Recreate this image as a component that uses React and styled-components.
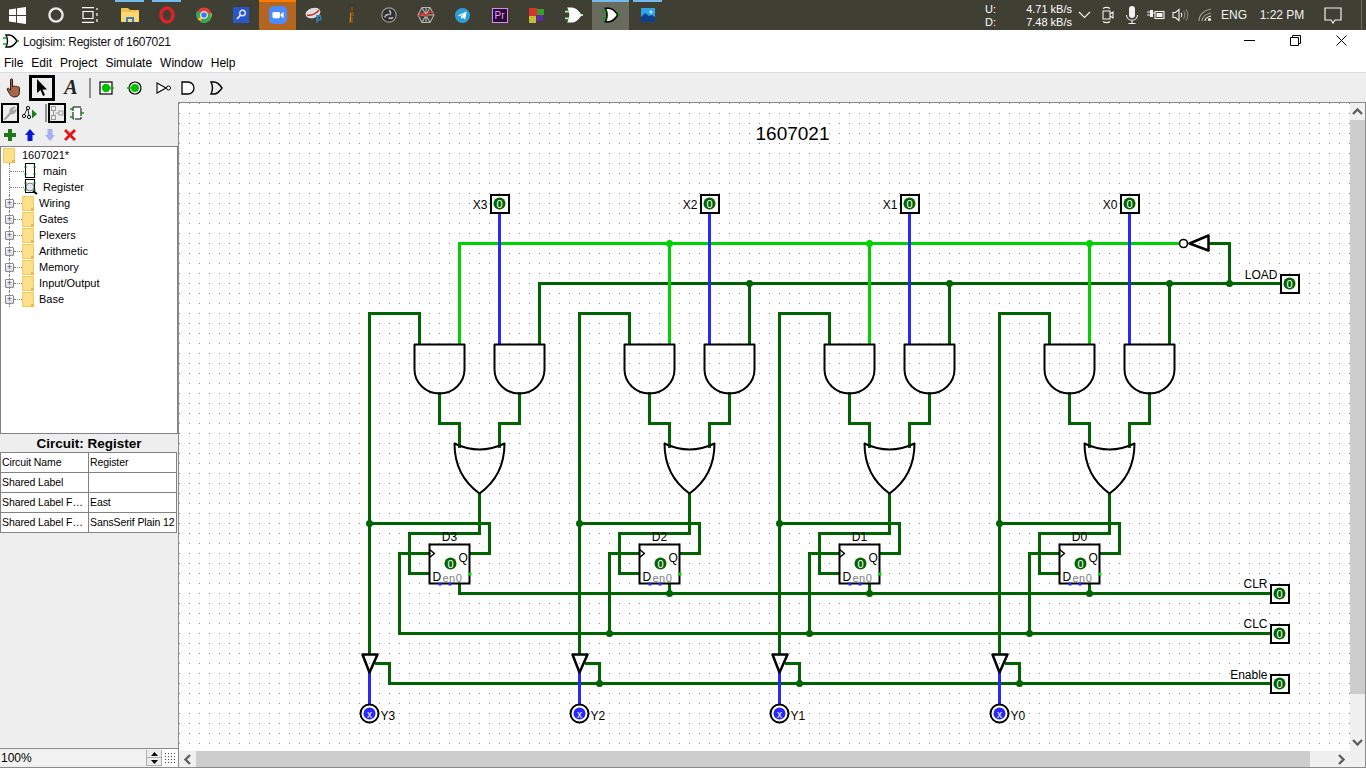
import React from "react";
import styled, { createGlobalStyle } from "styled-components";

const DARK = "#006400";
const LIME = "#00d200";
const BLUE = "#2828ff";

const Global = createGlobalStyle`
  html, body { margin: 0; padding: 0; overflow: hidden; background: #fff; }
  * { box-sizing: border-box; }
  body { font-family: "Liberation Sans", Arial, sans-serif; font-size: 12px; color: #000; }
`;

const Screen = styled.div`
  width: 1366px;
  height: 768px;
  display: flex;
  flex-direction: column;
  overflow: hidden;
`;

/* windows taskbar */
const Taskbar = styled.div`
  height: 30px;
  flex: none;
  display: flex;
  background: #3f4033;
  color: #fff;
`;

const TaskSlot = styled.div`
  width: 37px;
  height: 30px;
  display: flex;
  align-items: center;
  justify-content: center;
  position: relative;
  background: ${(p) => (p.$tone === "zoom" ? "#b4651f" : p.$tone === "active" ? "#6a6b5f" : "transparent")};
  &::before {
    content: "";
    position: absolute;
    top: 0;
    height: 2px;
    left: ${(p) => (p.$tone ? "0" : "4px")};
    right: ${(p) => (p.$tone ? "0" : "4px")};
    background: ${(p) => (p.$tone === "zoom" ? "#ff7a00" : p.$open || p.$tone === "active" ? "#76b9ed" : "transparent")};
  }
`;

const Tray = styled.div`
  margin-left: auto;
  display: flex;
  align-items: center;
  height: 30px;
  font-size: 12px;
`;

const NetSpeed = styled.div`
  width: 87px;
  display: grid;
  grid-template-columns: 1fr auto;
  font-size: 11px;
  line-height: 13px;
  padding-top: 2px;
  span:nth-child(even) { text-align: right; }
`;

const TraySlot = styled.div`
  width: ${(p) => p.$w}px;
  height: 30px;
  display: flex;
  align-items: center;
  justify-content: center;
  white-space: nowrap;
  color: #f2f2f2;
`;

const TrayEnd = styled.div`
  width: 15px;
  height: 30px;
  background: linear-gradient(90deg, transparent 10px, #6a6b5f 10px, #6a6b5f 11px, transparent 11px);
`;

/* logisim window */
const TitleBar = styled.div`
  height: 22px;
  flex: none;
  display: flex;
  align-items: center;
  padding-left: 3px;
  padding-right: 2px;
  background: #fff;
`;

const TitleText = styled.span`
  margin-left: 4px;
  padding-top: 2px;
  font-size: 12px;
  letter-spacing: -0.3px;
  color: #111;
`;

const WindowControls = styled.div`
  margin-left: auto;
  display: flex;
  align-self: flex-start;
`;

const WindowButton = styled.div`
  width: 46px;
  height: 20px;
  display: flex;
  align-items: center;
  justify-content: center;
`;

const MenuBar = styled.div`
  height: 20px;
  flex: none;
  display: flex;
  align-items: center;
  background: #fff;
  padding: 2px 0 0 4px;
`;

const MenuItem = styled.span`
  margin-right: 8px;
  font-size: 12px;
`;

const ToolBar = styled.div`
  height: 30px;
  flex: none;
  display: flex;
  align-items: center;
  background: #eeeeee;
  border-top: 1px solid #dcdcdc;
  padding-left: 2px;
`;

const Tool = styled.div`
  width: 26px;
  height: 26px;
  flex: none;
  margin-left: ${(p) => p.$ml || 0}px;
  display: flex;
  align-items: center;
  justify-content: center;
  border: ${(p) => (p.$selected ? "3px solid #000" : "none")};
  font-family: "Liberation Serif", serif;
  font-weight: bold;
  font-style: italic;
  font-size: 20px;
  color: #222;
`;

const ToolSeparator = styled.div`
  width: 2px;
  height: ${(p) => p.$h}px;
  flex: none;
  margin-left: ${(p) => p.$ml}px;
  background: #8f8f8f;
`;

const Workspace = styled.div`
  flex: 1;
  min-height: 0;
  display: flex;
`;

const LeftColumn = styled.div`
  width: 178px;
  flex: none;
  display: flex;
  flex-direction: column;
  background: #eeeeee;
`;

const ExplorerBar = styled.div`
  height: 22px;
  flex: none;
  display: flex;
  align-items: center;
  padding-left: 1px;
`;

const ExplorerTool = styled.div`
  width: ${(p) => p.$w || 18}px;
  height: 20px;
  flex: none;
  margin-left: ${(p) => p.$ml || 0}px;
  display: flex;
  align-items: center;
  justify-content: center;
  border: ${(p) => (p.$selected ? "2px solid #000" : "none")};
`;

const ActionBar = styled.div`
  height: 22px;
  flex: none;
  display: flex;
  align-items: center;
  gap: 8px;
  padding-left: 4px;
`;

const TreeBox = styled.div`
  height: 288px;
  flex: none;
  background: #fff;
  border: 1px solid #828282;
  font-size: 11px;
`;

const TreeRow = styled.div`
  height: 16px;
  display: flex;
  align-items: center;
  white-space: nowrap;
`;

const RootSpacer = styled.div`
  width: 2px;
  flex: none;
`;

const Guide = styled.div`
  width: ${(p) => p.$w}px;
  height: 16px;
  flex: none;
  margin-left: 8px;
  border-left: 1px dotted #808080;
  display: flex;
  align-items: center;
`;

const GuideStub = styled.div`
  flex: 1;
  border-top: 1px dotted #808080;
`;

const Expander = styled.div`
  width: 9px;
  height: 9px;
  flex: none;
  margin-left: -5px;
  border: 1px solid #8a8a8a;
  border-radius: 1px;
  background: linear-gradient(#fff, #dcdcdc);
  color: #1f3f8f;
  font-size: 9px;
  line-height: 7px;
  text-align: center;
`;

const TreeLabel = styled.span`
  margin-left: ${(p) => p.$ml || 0}px;
  font-size: 11px;
`;

const AttrTitle = styled.div`
  height: 18px;
  flex: none;
  display: flex;
  align-items: center;
  justify-content: center;
  font-weight: bold;
  font-size: 13.5px;
`;

const AttrTable = styled.div`
  display: grid;
  grid-template-columns: 88px 88px;
  grid-auto-rows: 20px;
  flex: none;
  border-top: 1px solid #828282;
  border-left: 1px solid #828282;
  margin-right: 1px;
`;

const AttrCell = styled.div`
  border-right: 1px solid #828282;
  border-bottom: 1px solid #828282;
  background: #fff;
  padding-left: 1px;
  font-size: 10.5px;
  letter-spacing: -0.1px;
  line-height: 18px;
  white-space: nowrap;
`;

const Filler = styled.div`
  flex: 1;
`;

const ZoomRow = styled.div`
  height: 20px;
  flex: none;
  display: flex;
  align-items: stretch;
  border-top: 1px solid #8a8a8a;
  border-bottom: 1px solid #8a8a8a;
`;

const ZoomInput = styled.div`
  width: 146px;
  padding-left: 1px;
  margin: 2px 0;
  font-size: 12px;
  line-height: 14px;
  background: #f2f2f2;
`;

const Spinner = styled.div`
  width: 16px;
  display: flex;
  flex-direction: column;
  border-left: 1px solid #b0b0b0;
  border-right: 1px solid #b0b0b0;
  margin: 1px 0;
`;

const SpinButton = styled.div`
  flex: 1;
  display: flex;
  align-items: center;
  justify-content: center;
  background: #ececec;
  border-bottom: 1px solid #b0b0b0;
`;

const GripBox = styled.div`
  flex: 1;
  display: flex;
  align-items: center;
  justify-content: center;
  background: #fff;
`;

const RightColumn = styled.div`
  flex: 1;
  min-width: 0;
  display: flex;
  flex-direction: column;
  border: 1px solid #8a8a8a;
`;

const CanvasRow = styled.div`
  height: 648px;
  flex: none;
  display: flex;
`;

const CanvasSvg = styled.svg`
  width: 1171px;
  height: 648px;
  flex: none;
  display: block;
  background: #fff;
`;

const VerticalBar = styled.div`
  width: 15px;
  flex: none;
  display: flex;
  flex-direction: column;
  background: #f0f0f0;
`;

const HorizontalBar = styled.div`
  height: 16px;
  flex: none;
  display: flex;
  background: #f0f0f0;
`;

const ScrollArrow = styled.div`
  flex: none;
  width: ${(p) => p.$w}px;
  height: ${(p) => p.$h}px;
  display: flex;
  align-items: center;
  justify-content: center;
`;

const ScrollThumb = styled.div`
  flex: none;
  width: ${(p) => p.$w || "auto"};
  height: ${(p) => p.$h || "auto"};
  background: #cdcdcd;
`;

const Track = styled.div`
  flex: 1;
`;

/* circuit parts */
const WirePath = styled.path`
  fill: none;
  stroke: ${(p) => p.$c || DARK};
  stroke-width: 3;
  stroke-linecap: square;
  stroke-linejoin: miter;
`;

const GatePath = styled.path`
  fill: none;
  stroke: #000;
  stroke-width: ${(p) => p.$w || 2};
  stroke-linejoin: round;
`;

const Joint = styled.circle`
  fill: ${(p) => p.$c || DARK};
`;

const PinBox = styled.rect`
  fill: #fff;
  stroke: #000;
  stroke-width: 2;
`;

const CanvasText = styled.text`
  font-family: "Liberation Sans", Arial, sans-serif;
  font-size: ${(p) => p.$size || 12}px;
  fill: ${(p) => p.$fill || "#000"};
  text-anchor: ${(p) => p.$anchor || "start"};
  letter-spacing: ${(p) => p.$track || 0}px;
`;

const Chev = ({ d }) => (
  <svg width="11" height="11" viewBox="0 0 11 11">
    <path d={d} fill="none" stroke="#606060" strokeWidth="2.4" />
  </svg>
);

const OrIcon = ({ fill = "none", stroke = "#000", size = 16, stub }) => (
  <svg width={size} height={size} viewBox="0 0 16 16">
    <path d="M3 2h3c3 0 6 3 8 6-2 3-5 6-8 6H3c2-4 2-8 0-12z" fill={fill} stroke={stroke} strokeWidth="1.4" />
    {stub && <path d="M0 5h4M0 11h4M14 8h2" stroke={stub} strokeWidth="1.6" />}
  </svg>
);

const Windows = () => (
  <svg width="17" height="17" viewBox="0 0 17 17" style={{ marginLeft: -2 }}>
    <path d="M0 2.4 7 1.4V8H0zM8 1.3 17 0V8H8zM0 9h7v6.6l-7-1zM8 9h9v8l-9-1.3z" fill="#fff" />
  </svg>
);

const Cortana = () => (
  <svg width="18" height="18" viewBox="0 0 18 18">
    <circle cx="9" cy="9" r="6.6" fill="none" stroke="#e8e8e8" strokeWidth="2.4" />
  </svg>
);

const TaskView = () => (
  <svg width="18" height="16" viewBox="0 0 18 16" style={{ marginLeft: -4 }}>
    <path d="M0 .7h12M0 15.3h12M1 4.5h10v7H1zM15 1v2M15 6v3M15 12v3" fill="none" stroke="#fff" strokeWidth="1.2" />
  </svg>
);

const Explorer = () => (
  <svg width="18" height="16" viewBox="0 0 18 16">
    <path d="M0 1h7l2 2h9v12H0z" fill="#f4c14d" />
    <path d="M0 5h18v10H0z" fill="#fbd872" />
    <path d="M5 10h8v5h-2v-3H7v3H5z" fill="#2f7fc9" />
  </svg>
);

const Opera = () => (
  <svg width="16" height="18" viewBox="0 0 16 18">
    <ellipse cx="8" cy="9" rx="6" ry="7" fill="none" stroke="#d9222a" strokeWidth="3.6" />
  </svg>
);

const Chrome = () => (
  <svg width="16" height="16" viewBox="0 0 16 16">
    <circle cx="8" cy="8" r="7.6" fill="#e0403a" />
    <path d="M8 8 1.4 12A7.6 7.6 0 0 1 1 4z" fill="#34a853" />
    <path d="M8 8 15.4 6A7.6 7.6 0 0 1 7 15.5L1.4 12z" fill="#fbc02d" />
    <path d="M4 15 8 8l7.4-2A7.6 7.6 0 0 0 15 11.5a7.6 7.6 0 0 1-11 3.5z" fill="#34a853" />
    <circle cx="8" cy="8" r="3.8" fill="#fff" />
    <circle cx="8" cy="8" r="2.8" fill="#3b78e7" />
  </svg>
);

const Finder = () => (
  <svg width="16" height="16" viewBox="0 0 16 16">
    <rect width="16" height="16" fill="#2a56c6" />
    <circle cx="9.5" cy="6" r="2.8" fill="none" stroke="#dce6ff" strokeWidth="1.4" />
    <path d="M7.5 8.2 4 12" stroke="#dce6ff" strokeWidth="1.8" />
  </svg>
);

const ZoomApp = () => (
  <svg width="18" height="18" viewBox="0 0 18 18">
    <rect width="18" height="18" rx="5" fill="#4a8cff" />
    <rect x="3.5" y="6" width="7.5" height="6.2" rx="1.4" fill="#fff" />
    <path d="M11.6 8.3 14.6 6v6.2l-3-2.2z" fill="#fff" />
  </svg>
);

const Dish = () => (
  <svg width="20" height="18" viewBox="0 0 20 18">
    <ellipse cx="8" cy="7" rx="7.6" ry="5" fill="#dedede" transform="rotate(-18 8 7)" />
    <path d="M2 9c4 1 9-1 12-5" fill="none" stroke="#c9302c" strokeWidth="1.6" />
    <path d="M11 10c3-1 5 0 5 2s-2 3-3 1 1-4 3-3M12 12v5" fill="none" stroke="#2e86c1" strokeWidth="1.4" />
  </svg>
);

const Torch = () => (
  <svg width="8" height="18" viewBox="0 0 8 18">
    <path d="M3 1h2v4H3zM2 6h4v4H2zM1 11h4v6H1z" fill="#7a4d12" />
    <path d="M2 7h1v9H2z" fill="#c58a2b" />
  </svg>
);

const Obs = () => (
  <svg width="16" height="16" viewBox="0 0 16 16">
    <circle cx="8" cy="8" r="7.2" fill="#2f2f30" stroke="#9a9a9a" strokeWidth="1.2" />
    <path d="M8 3.5a2.6 2.6 0 0 1 .6 4.4M4 10.5a2.6 2.6 0 0 1 3.8-2.6M12 10.2a2.6 2.6 0 0 1-4.2.2" fill="none" stroke="#bdbdbd" strokeWidth="1.6" />
  </svg>
);

const Web = () => (
  <svg width="18" height="18" viewBox="0 0 18 18">
    <path d="M5 1.5h8L17 9l-4 7.5H5L1 9zM9 1v16M1 9h16M5 1.5l8 15M13 1.5l-8 15" fill="none" stroke="#b5b5b5" strokeWidth="1.1" />
    <path d="M1.5 10 6 7l3 3 3.5-4 4 1.5" fill="none" stroke="#d62d2d" strokeWidth="1.8" />
  </svg>
);

const Telegram = () => (
  <svg width="15" height="15" viewBox="0 0 15 15">
    <circle cx="7.5" cy="7.5" r="7.5" fill="#2a9fd8" />
    <path d="M2.8 7.4 11.6 3.6 10.2 11.6 7.6 9.6 6.3 10.9 6 8.6 10.2 5 4.9 8.2z" fill="#fff" />
  </svg>
);

const PrBadge = styled.div`
  width: 16px;
  height: 15px;
  border: 1px solid #d88ef0;
  background: #2a0a3a;
  color: #e7a6f7;
  font-size: 10px;
  line-height: 13px;
  text-align: center;
`;

const Blocks = () => (
  <svg width="15" height="15" viewBox="0 0 15 15">
    <path d="M0 0h8v8H0z" fill="#d8332a" />
    <path d="M8 1h7v6H8z" fill="#3aa02b" />
    <path d="M0 8h7v7H0z" fill="#c6bd36" />
    <path d="M7 7h7v6H7z" fill="#5a2ea6" />
  </svg>
);

const Photos = () => (
  <svg width="14" height="14" viewBox="0 0 14 14">
    <rect width="14" height="14" fill="#2ea5e6" />
    <path d="M0 14V9l4-4 4 3 3-1 3 2v5z" fill="#123f8a" />
    <path d="M10 2.5v3M8.5 4h3" stroke="#fff" strokeWidth="1" />
  </svg>
);

const taskIcons = [
  { icon: <Windows /> },
  { icon: <Cortana /> },
  { icon: <TaskView /> },
  { icon: <Explorer />, open: true },
  { icon: <Opera />, open: true },
  { icon: <Chrome /> },
  { icon: <Finder /> },
  { icon: <ZoomApp />, tone: "zoom" },
  { icon: <Dish /> },
  { icon: <Torch /> },
  { icon: <Obs /> },
  { icon: <Web /> },
  { icon: <Telegram /> },
  { icon: <PrBadge>Pr</PrBadge> },
  { icon: <Blocks /> },
  { icon: <OrIcon fill="#fff" stroke="#fff" size={18} stub="#a9f0a9" /> },
  { icon: <OrIcon fill="#fff" stroke="#000" size={18} stub="#00a000" />, tone: "active" },
  { icon: <Photos />, open: true },
];

const stroke = { fill: "none", stroke: "#f2f2f2", strokeWidth: 1.1 };

const TrayCamera = () => (
  <svg width="16" height="18" viewBox="0 0 16 18">
    <path d="M3 5h7v8H3zM10 8l3-2v6l-3-2z" {...stroke} />
    <path d="M3 2.5c2-1.3 5-1.3 7 0M3 15.5c2 1.3 5 1.3 7 0" {...stroke} />
  </svg>
);

const TrayMic = () => (
  <svg width="14" height="20" viewBox="0 0 14 20">
    <rect x="4" y="1" width="6" height="12" rx="3" fill="#f2f2f2" />
    <path d="M1.5 10c0 7 11 7 11 0M7 15.5V18M3.5 18.5h7" {...stroke} />
  </svg>
);

const TrayBattery = () => (
  <svg width="18" height="12" viewBox="0 0 18 12">
    <path d="M0 3h3M0 6h3" {...stroke} />
    <rect x="3" y="1" width="3" height="7" fill="#f2f2f2" />
    <path d="M6 4h2" {...stroke} />
    <rect x="8" y="2.5" width="9" height="7" {...stroke} />
    <rect x="9.5" y="4" width="6" height="4" fill="#f2f2f2" />
  </svg>
);

const TrayVolume = () => (
  <svg width="17" height="14" viewBox="0 0 17 14">
    <path d="M1 4.5h2.5L7 1.5v11l-3.5-3H1z" {...stroke} />
    <path d="M9 5c1 1 1 3 0 4" {...stroke} />
    <path d="M11.5 3c1.7 2 1.7 6 0 8M14 1.5c2.4 3 2.4 8 0 11" fill="none" stroke="#8b8b80" strokeWidth="1.1" />
  </svg>
);

const TrayWifi = () => (
  <svg width="16" height="14" viewBox="0 0 16 14">
    <path d="M1 13C1 7 6 2 13 1M4 13c0-4 4-7 9-8" fill="none" stroke="#a5a59b" strokeWidth="1.1" />
    <path d="M7 13c0-2 2-4 6-5" {...stroke} />
    <circle cx="11.5" cy="11.5" r="1.6" fill="#f2f2f2" />
  </svg>
);

const Note = () => (
  <svg width="18" height="17" viewBox="0 0 18 17">
    <path d="M1 1h16v12h-6l-2 3-2-3H1z" fill="none" stroke="#f2f2f2" strokeWidth="1.2" />
  </svg>
);

const AndTool = () => (
  <svg width="16" height="16" viewBox="0 0 16 16">
    <path d="M2 2h6a6 6 0 0 1 0 12H2z" fill="#fff" stroke="#000" strokeWidth="1.3" />
  </svg>
);

const NotTool = () => (
  <svg width="16" height="14" viewBox="0 0 16 14">
    <path d="M1 2l9 5-9 5z" fill="#fff" stroke="#000" strokeWidth="1.1" />
    <circle cx="12.5" cy="7" r="2" fill="#fff" stroke="#000" strokeWidth="1" />
  </svg>
);

const PinInTool = () => (
  <svg width="16" height="14" viewBox="0 0 16 14">
    <rect x="1" y="1" width="12" height="12" fill="#fff" stroke="#000" strokeWidth="1.2" />
    <circle cx="7" cy="7" r="4.2" fill="#00c000" />
    <path d="M11 7h4" stroke="#00c000" strokeWidth="1.6" />
  </svg>
);

const PinOutTool = () => (
  <svg width="16" height="14" viewBox="0 0 16 14">
    <circle cx="8" cy="7" r="6" fill="#fff" stroke="#000" strokeWidth="1.2" />
    <circle cx="8" cy="7" r="4" fill="#00c000" />
    <path d="M0 7h4" stroke="#00c000" strokeWidth="1.6" />
  </svg>
);

const HandTool = () => (
  <svg width="18" height="20" viewBox="0 0 16 18">
    <path d="M4 1.5c0-1 1.8-1 1.8 0V8l1-.6c.6-.4 1.4-.2 1.7.3.7-.5 1.5-.3 1.8.3.7-.4 1.6 0 1.7.7V13c0 2.5-1.6 4-4 4H7c-2 0-3-1.2-4-3L1 10.5c-.5-1 .8-1.8 1.6-1L4 11z" fill="#a8654a" stroke="#2c1a14" strokeWidth=".9" />
  </svg>
);

const ArrowTool = () => (
  <svg width="12" height="18" viewBox="0 0 12 18">
    <path d="M1 0v14l3.5-3 2.5 6 2-1-2.5-5.500H11z" fill="#000" />
  </svg>
);

const Wrench = () => (
  <svg width="16" height="16" viewBox="0 0 16 16">
    <path d="M1 15l7-8c-1-3 1-6 6-6l-3 3 1.5 2L15 3c.5 4-2.5 6.5-6 6l-6 6.5z" fill="#a6a6a6" stroke="#8c8c8c" strokeWidth=".6" />
  </svg>
);

const TreeTool = () => (
  <svg width="16" height="14" viewBox="0 0 16 14">
    <circle cx="6" cy="2" r="1.6" fill="#fff" stroke="#000" />
    <circle cx="2" cy="10" r="1.6" fill="#fff" stroke="#000" />
    <circle cx="7" cy="11" r="1.6" fill="#fff" stroke="#000" />
    <path d="M5 3 2.5 8.5M6 3.5 7 9.5" stroke="#000" strokeWidth=".8" />
    <path d="M10 3.5l5 4.5-5 4.5z" fill="#1a7f1a" />
  </svg>
);

const LayoutTool = () => (
  <svg width="14" height="14" viewBox="0 0 14 14">
    <g fill="none" stroke="#9a9a9a">
      <rect x="1.5" y=".5" width="4" height="4" />
      <rect x="1.5" y="9.5" width="4" height="4" />
      <rect x="9" y="5" width="4" height="4" />
      <path d="M3.5 4.5v5M5.5 7H9" />
    </g>
  </svg>
);

const AppearanceTool = () => (
  <svg width="14" height="14" viewBox="0 0 14 14">
    <path d="M3 1h8v12H3z" fill="#fff" stroke="#000" strokeDasharray="8 1" />
    <path d="M0 3h3M0 11h3M11 7h3" stroke="#00a000" strokeWidth="1.4" />
  </svg>
);

const actionPaths = [
  ["M4 0h4v4h4v4H8v4H4V8H0V4h4z", "#1c7a1c"],
  ["M6 0l5 6H8.5v6h-5V6H1z", "#0b16d8"],
  ["M3.5 0h5v6H11l-5 6-5-6h2.5z", "#a9aef2"],
  ["M0 2l2-2 4 4 4-4 2 2-4 4 4 4-2 2-4-4-4 4-2-2 4-4z", "#e0161c"],
];

const Folder = ({ size = 12 }) => (
  <svg width={size} height="15" viewBox="0 0 12 15" style={{ flex: "none" }}>
    <path d="M.5.5h11v14H.5z" fill="#fde08a" stroke="#f2c95c" />
    <path d="M9 12h3v3H9z" fill="#f0b93a" />
  </svg>
);

const CircuitIcon = ({ lens }) => (
  <svg width="14" height="16" viewBox="0 0 14 16" style={{ flex: "none" }}>
    <rect x="1.5" y=".5" width="9" height={lens ? 13 : 14} fill="#fff" stroke="#000" />
    {lens && <circle cx="6" cy="8" r="4" fill="#e6e6f4" stroke="#333" strokeWidth=".6" />}
    <path d="M0 4h3M0 11h3M9 4h3M9 11h3" stroke="#00b000" strokeWidth="1.2" />
    {lens && <path d="M9 12l4 3" stroke="#000" strokeWidth="2" />}
  </svg>
);

const library = ["Wiring", "Gates", "Plexers", "Arithmetic", "Memory", "Input/Output", "Base"];

const attrs = [
  ["Circuit Name", "Register"],
  ["Shared Label", ""],
  ["Shared Label F…", "East"],
  ["Shared Label F…", "SansSerif Plain 12"],
];

/* one full bit of the register, drawn at X3's place and shifted by dx */
const BitWires = ({ dx }) => (
  <g transform={`translate(${dx} 0)`}>
    <WirePath $c={BLUE} d="M499 213V343" />
    <WirePath $c={LIME} d="M459 243V343" />
    <WirePath d="M539 283V343" />
    <WirePath d="M419 343V313H369V653" />
    <WirePath d="M439 393V423H459V446" />
    <WirePath d="M519 393V423H499V446" />
    <WirePath d="M479 493V533H409V573H429" />
    <WirePath d="M369 523H489V553H469" />
    <WirePath d="M429 553H399V633" />
    <WirePath d="M459 583V593" />
    <WirePath d="M376 663H389V683" />
    <WirePath $c={BLUE} d="M369 672V703" />
    <Joint cx="369" cy="523" r="3.5" />
  </g>
);

const BitParts = ({ dx, n }) => (
  <g transform={`translate(${dx} 0)`}>
    <GatePath d="M414 344H464V369A25 24 0 0 1 414 369Z" />
    <GatePath d="M494 344H544V369A25 24 0 0 1 494 369Z" />
    <GatePath d="M454 443Q479 455 504 443Q504 475 479 493Q454 475 454 443Z" />
    <GatePath $w={2.5} d="M362 654H377L369 672Z" />

    <rect x="429" y="544" width="40" height="39" fill="#fff" fillOpacity="0.85" stroke="#000" strokeWidth="2" />
    <GatePath $w={1.5} d="M429 549L434 553L429 557" />
    <CanvasText x="449" y="540" $anchor="middle">D{n}</CanvasText>
    <CanvasText x="458" y="561">Q</CanvasText>
    <CanvasText x="432" y="580">D</CanvasText>
    <CanvasText x="442" y="581" $size={11} $fill="#808080" $track={0.5}>en0</CanvasText>
    <Joint cx="450" cy="563" r="6" />
    <CanvasText x="450" y="567" $size={11} $fill="#fff" $anchor="middle">0</CanvasText>
    <rect x="438" y="582" width="3" height="3" fill={BLUE} />
    <rect x="448" y="582" width="3" height="3" fill={BLUE} />
    <rect x="468" y="572" width="3" height="3" fill="#00e000" />

    <circle cx="369" cy="713" r="9" fill="#fff" stroke="#000" strokeWidth="2" />
    <Joint cx="369" cy="713" r="6" $c={BLUE} />
    <CanvasText x="369" y="717" $size={10} $fill="#fff" $anchor="middle">x</CanvasText>
    <CanvasText x="380" y="719">Y{n}</CanvasText>

    <PinBox x="490.5" y="194.5" width="18" height="18" />
    <Joint cx="499" cy="203" r="6" />
    <CanvasText x="499" y="207" $size={11} $fill="#fff" $anchor="middle">0</CanvasText>
    <CanvasText x="487" y="208" $anchor="end">X{n}</CanvasText>
  </g>
);

const ControlPin = ({ x, y, label, labelEnd, lift = 6 }) => (
  <g>
    <PinBox x={x - 8.5} y={y - 8.5} width="18" height="18" />
    <Joint cx={x} cy={y} r="6" />
    <CanvasText x={x} y={y + 4} $size={11} $fill="#fff" $anchor="middle">0</CanvasText>
    <CanvasText x={labelEnd} y={y - lift} $anchor="end">{label}</CanvasText>
  </g>
);

const Circuit = () => {
  const offsets = [0, 210, 410, 630];
  return (
    <CanvasSvg viewBox="178.5 102.5 1171 648">
      <defs>
        <pattern id="dots" patternUnits="userSpaceOnUse" x="168.5" y="102.5" width="10" height="10">
          <rect x="0" y="0" width="1" height="1" fill="#8c8c8c" />
        </pattern>
      </defs>
      <rect x="178.5" y="102.5" width="1171" height="648" fill="url(#dots)" />

      <CanvasText x="792" y="139" $size={19} $anchor="middle">1607021</CanvasText>

      <WirePath $c={LIME} d="M459 243H1179" />
      <WirePath d="M539 283H1279" />
      <WirePath d="M1209 243H1229V283" />
      <WirePath d="M459 593H1270" />
      <WirePath d="M399 633H1270" />
      <WirePath d="M389 683H1270" />

      {offsets.map((dx) => (
        <BitWires key={dx} dx={dx} />
      ))}

      {[210, 410, 630].map((dx) => (
        <g key={dx}>
          <Joint cx={459 + dx} cy="243" r="3.5" $c={LIME} />
          <Joint cx={539 + dx} cy="283" r="3.5" />
          <Joint cx={459 + dx} cy="593" r="3.5" />
          <Joint cx={399 + dx} cy="633" r="3.5" />
          <Joint cx={389 + dx} cy="683" r="3.5" />
        </g>
      ))}
      <Joint cx="1229" cy="283" r="3.5" />

      {offsets.map((dx, i) => (
        <BitParts key={dx} dx={dx} n={3 - i} />
      ))}

      <GatePath $w={2.5} d="M1208 235V250L1189 243Z" />
      <circle cx="1183" cy="243" r="4" fill="#fff" stroke="#000" strokeWidth="1.6" />

      <ControlPin x={1289} y={283} label="LOAD" labelEnd={1277} lift={5} />
      <ControlPin x={1279} y={593} label="CLR" labelEnd={1267} />
      <ControlPin x={1279} y={633} label="CLC" labelEnd={1267} />
      <ControlPin x={1279} y={683} label="Enable" labelEnd={1267} lift={5} />
    </CanvasSvg>
  );
};

export default function App() {
  return (
    <Screen>
      <Global />
      <Taskbar>
        {taskIcons.map((t, i) => (
          <TaskSlot key={i} $open={t.open} $tone={t.tone}>
            {t.icon}
          </TaskSlot>
        ))}
        <Tray>
          <NetSpeed>
            <span>U:</span>
            <span>4.71 kB/s</span>
            <span>D:</span>
            <span>7.48 kB/s</span>
          </NetSpeed>
          <TraySlot $w={24}>
            <svg width="13" height="8" viewBox="0 0 13 8">
              <path d="M1 1l5.5 5.5L12 1" fill="none" stroke="#f2f2f2" strokeWidth="1.2" />
            </svg>
          </TraySlot>
          <TraySlot $w={24}><TrayCamera /></TraySlot>
          <TraySlot $w={24}><TrayMic /></TraySlot>
          <TraySlot $w={23}><TrayBattery /></TraySlot>
          <TraySlot $w={26}><TrayVolume /></TraySlot>
          <TraySlot $w={26}><TrayWifi /></TraySlot>
          <TraySlot $w={30}>ENG</TraySlot>
          <TraySlot $w={66}>1:22 PM</TraySlot>
          <TraySlot $w={36}><Note /></TraySlot>
          <TrayEnd />
        </Tray>
      </Taskbar>

      <TitleBar>
        <OrIcon size={16} stub="#00b000" fill="#fff" />
        <TitleText>Logisim: Register of 1607021</TitleText>
        <WindowControls>
          <WindowButton>
            <svg width="11" height="11" viewBox="0 0 11 11"><path d="M0 5.5h11" stroke="#000" /></svg>
          </WindowButton>
          <WindowButton>
            <svg width="11" height="11" viewBox="0 0 11 11"><path d="M.5 2.5h8v8h-8zM2.5 2.5v-2h8v8h-2" fill="none" stroke="#000" /></svg>
          </WindowButton>
          <WindowButton>
            <svg width="11" height="11" viewBox="0 0 11 11"><path d="M.5.5l10 10M10.5.5l-10 10" stroke="#000" /></svg>
          </WindowButton>
        </WindowControls>
      </TitleBar>

      <MenuBar>
        {["File", "Edit", "Project", "Simulate", "Window", "Help"].map((m) => (
          <MenuItem key={m}>{m}</MenuItem>
        ))}
      </MenuBar>

      <ToolBar>
        <Tool><HandTool /></Tool>
        <Tool $ml={1} $selected><ArrowTool /></Tool>
        <Tool $ml={3}>A</Tool>
        <ToolSeparator $ml={5} $h={20} />
        <Tool $ml={3}><PinInTool /></Tool>
        <Tool $ml={2}><PinOutTool /></Tool>
        <Tool $ml={3}><NotTool /></Tool>
        <Tool $ml={-2}><AndTool /></Tool>
        <Tool $ml={2}><OrIcon /></Tool>
      </ToolBar>

      <Workspace>
        <LeftColumn>
          <ExplorerBar>
            <ExplorerTool $selected><Wrench /></ExplorerTool>
            <ExplorerTool $ml={2}><TreeTool /></ExplorerTool>
            <ToolSeparator $ml={6} $h={18} />
            <ExplorerTool $ml={1} $selected><LayoutTool /></ExplorerTool>
            <ExplorerTool $ml={2}><AppearanceTool /></ExplorerTool>
          </ExplorerBar>
          <ActionBar>
            {actionPaths.map(([d, fill]) => (
              <svg key={fill} width="12" height="12" viewBox="0 0 12 12">
                <path d={d} fill={fill} />
              </svg>
            ))}
          </ActionBar>
          <TreeBox>
            <TreeRow>
              <RootSpacer />
              <Folder />
              <TreeLabel $ml={7}>1607021*</TreeLabel>
            </TreeRow>
            <TreeRow>
              <Guide $w={15}><GuideStub /></Guide>
              <CircuitIcon />
              <TreeLabel $ml={5}>main</TreeLabel>
            </TreeRow>
            <TreeRow>
              <Guide $w={15}><GuideStub /></Guide>
              <CircuitIcon lens />
              <TreeLabel $ml={5}>Register</TreeLabel>
            </TreeRow>
            {library.map((lib) => (
              <TreeRow key={lib}>
                <Guide $w={13}>
                  <Expander>+</Expander>
                  <GuideStub />
                </Guide>
                <Folder />
                <TreeLabel $ml={5}>{lib}</TreeLabel>
              </TreeRow>
            ))}
          </TreeBox>
          <AttrTitle>Circuit: Register</AttrTitle>
          <AttrTable>
            {attrs.map(([k, v], i) => (
              <React.Fragment key={i}>
                <AttrCell>{k}</AttrCell>
                <AttrCell>{v}</AttrCell>
              </React.Fragment>
            ))}
          </AttrTable>
          <Filler />
          <ZoomRow>
            <ZoomInput>100%</ZoomInput>
            <Spinner>
              <SpinButton>
                <svg width="7" height="4" viewBox="0 0 7 4"><path d="M3.5 0l3.5 4H0z" /></svg>
              </SpinButton>
              <SpinButton>
                <svg width="7" height="4" viewBox="0 0 7 4"><path d="M0 0h7L3.5 4z" /></svg>
              </SpinButton>
            </Spinner>
            <GripBox>
              <svg width="11" height="11" viewBox="0 0 11 11">
                <path d="M0 .5h11M0 3.5h11M0 6.5h11M0 9.5h11" stroke="#444" strokeDasharray="1 2" />
              </svg>
            </GripBox>
          </ZoomRow>
        </LeftColumn>

        <RightColumn>
          <CanvasRow>
            <Circuit />
            <VerticalBar>
              <ScrollArrow $w={15} $h={17}><Chev d="M1 8l4.5-4.5L10 8" /></ScrollArrow>
              <ScrollThumb $h="574px" />
              <Track />
              <ScrollArrow $w={15} $h={17}><Chev d="M1 3l4.5 4.5L10 3" /></ScrollArrow>
            </VerticalBar>
          </CanvasRow>
          <HorizontalBar>
            <ScrollArrow $w={17} $h={16}><Chev d="M8 1L3.5 5.5 8 10" /></ScrollArrow>
            <ScrollThumb $w="1114px" />
            <Track />
            <ScrollArrow $w={17} $h={16}><Chev d="M3 1l4.5 4.5L3 10" /></ScrollArrow>
            <ScrollArrow $w={15} $h={16} />
          </HorizontalBar>
        </RightColumn>
      </Workspace>
    </Screen>
  );
}
